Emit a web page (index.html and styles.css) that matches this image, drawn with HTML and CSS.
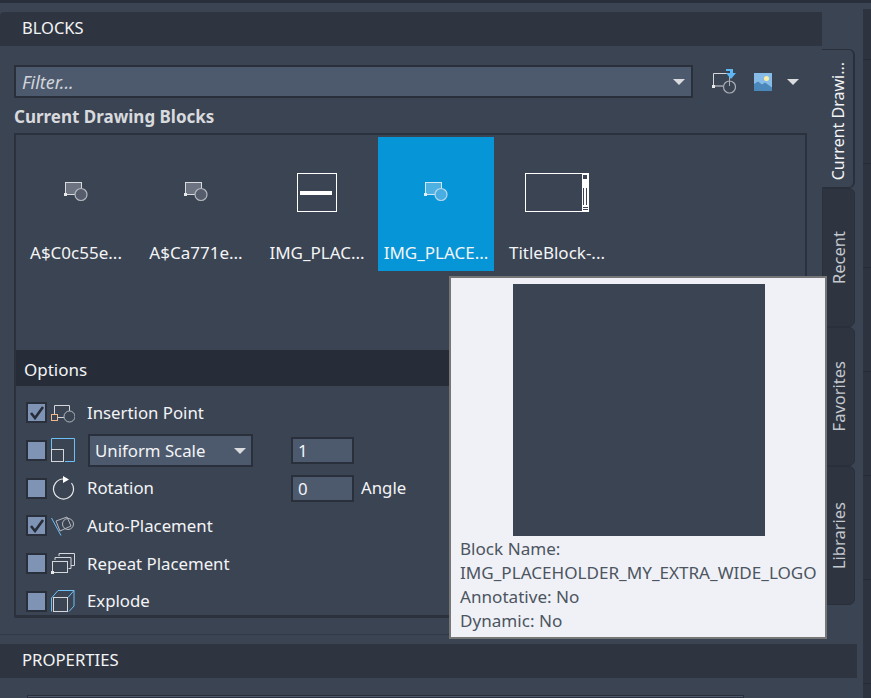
FILE: index.html
```html
<!DOCTYPE html>
<html lang="en">
<head>
<meta charset="utf-8">
<title>Blocks</title>
<link rel="stylesheet" href="styles.css">
</head>
<body>
<div class="page">
  <div class="main">
    <div class="bar blocks-bar">BLOCKS</div>
    <div class="body">
      <div class="panel">
        <div class="toolbar">
          <div class="filter"><span>Filter...</span><i class="caret"></i></div>
          <svg class="tool-a" width="24" height="25" viewBox="0 0 24 25"><path d="M1.500 17V4.500h16M1.500 17H11.500" fill="none" stroke="#d5d7db"/><rect x="0" y="16" width="3" height="3" fill="#e8e8e8"/><circle cx="17.500" cy="18" r="6" fill="none" stroke="#a9adb4" stroke-width="1.200"/><path d="M17.500 5v12" stroke="#a9adb4"/><path d="M14 0h7v4h3l-5 6-5-6h4V2h-4z" fill="#5cb8f5"/></svg>
          <svg class="tool-b" width="18" height="18" viewBox="0 0 18 18"><rect width="18" height="18" fill="#88bce8"/><circle cx="12.500" cy="5.500" r="2.500" fill="#fdeea4"/><path d="M0 18v-7l4-2.500 4 3 3-2 7 5v3.500z" fill="#4a87bb"/></svg>
          <i class="caret tool-caret"></i>
        </div>
        <div class="section-title">Current Drawing Blocks</div>
        <div class="browser">
          <div class="grid">
            <div class="cell">
              <div class="thumb"><svg width="24" height="20" viewBox="0 0 24 20"><rect x="1.500" y="0.500" width="16" height="12" fill="#6d7380" stroke="#d8dade"/><rect x="0" y="11" width="3" height="3" fill="#e8e8e8"/><circle cx="17" cy="12.500" r="6" fill="#565d6c" stroke="#b5b8be" stroke-width="1.200"/></svg></div>
              <div class="name">A$C0c55e...</div>
            </div>
            <div class="cell">
              <div class="thumb"><svg width="24" height="20" viewBox="0 0 24 20"><rect x="1.500" y="0.500" width="16" height="12" fill="#6d7380" stroke="#d8dade"/><rect x="0" y="11" width="3" height="3" fill="#e8e8e8"/><circle cx="17" cy="12.500" r="6" fill="#565d6c" stroke="#b5b8be" stroke-width="1.200"/></svg></div>
              <div class="name">A$Ca771e...</div>
            </div>
            <div class="cell">
              <div class="thumb"><svg width="40" height="40" viewBox="0 0 40 40"><rect x="0.500" y="1.500" width="39" height="38" fill="none" stroke="#fff"/><rect x="3" y="19" width="32" height="4" fill="#fff"/></svg></div>
              <div class="name">IMG_PLAC...</div>
            </div>
            <div class="cell selected">
              <div class="thumb"><svg width="24" height="20" viewBox="0 0 24 20"><rect x="1.500" y="0.500" width="16" height="12" fill="#4fb0e2" stroke="#cfe6f3"/><rect x="0" y="11" width="3" height="3" fill="#e0f0f8"/><circle cx="17" cy="12.500" r="6" fill="#49ade2" stroke="#b5d8ec" stroke-width="1.200"/></svg></div>
              <div class="name">IMG_PLACE...</div>
            </div>
            <div class="cell">
              <div class="thumb"><svg width="64" height="40" viewBox="0 0 64 40"><rect x="0.500" y="1.500" width="63" height="38" fill="none" stroke="#fff"/><rect x="57" y="2" width="6" height="37" fill="#fff"/><rect x="58" y="3" width="4" height="4" fill="#3c4453"/><path d="M58.500 16v17M61.500 16v17M58 35.500h5M58 37.500h5" stroke="#3c4453" fill="none"/></svg></div>
              <div class="name">TitleBlock-...</div>
            </div>
          </div>
          <div class="options">
            <div class="options-head">Options</div>
            <div class="option-list">
              <div class="opt">
                <span class="check"><svg width="16" height="14" viewBox="0 0 16 14"><path d="M2 7l4 5 8-11" fill="none" stroke="#262d39" stroke-width="2.600"/></svg></span>
                <svg class="ico" width="24" height="22" viewBox="0 0 24 22"><path d="M3.500 12V3.500h15V9M7 15.500h6" fill="none" stroke="#d5d7db"/><rect x="0.500" y="12.500" width="6" height="6" fill="none" stroke="#f0b68c"/><circle cx="18.500" cy="14.500" r="5.500" fill="none" stroke="#b5b8be"/></svg>
                <span class="label">Insertion Point</span>
              </div>
              <div class="opt">
                <span class="check"></span>
                <svg class="ico" width="24" height="26" viewBox="0 0 24 26"><path d="M.5 11V.5H23.500V23.500H14" fill="none" stroke="#6cc0f5"/><rect x=".5" y="11.500" width="12" height="12" fill="none" stroke="#d5d7db"/></svg>
                <div class="select"><span>Uniform Scale</span><i class="caret"></i></div>
                <div class="num num-scale">1</div>
              </div>
              <div class="opt">
                <span class="check"></span>
                <svg class="ico" width="24" height="24" viewBox="0 0 24 24"><path d="M12 3A10 10 0 1 0 20.500 7" fill="none" stroke="#e8e8e8" stroke-width="1.200"/><path d="M12 0l6 3.500-6 3.500z" fill="#fff"/></svg>
                <span class="label label-rot">Rotation</span>
                <div class="num">0</div>
                <span class="label angle">Angle</span>
              </div>
              <div class="opt">
                <span class="check"><svg width="16" height="14" viewBox="0 0 16 14"><path d="M2 7l4 5 8-11" fill="none" stroke="#262d39" stroke-width="2.600"/></svg></span>
                <svg class="ico" width="24" height="22" viewBox="0 0 24 22"><path d="M.5 3L10 20.500" stroke="#6cc0f5" fill="none"/><path d="M5 6l11-4 4 9-11 5z" fill="none" stroke="#b5b8be"/><circle cx="17" cy="9" r="5.500" fill="none" stroke="#b5b8be"/></svg>
                <span class="label">Auto-Placement</span>
              </div>
              <div class="opt">
                <span class="check"></span>
                <svg class="ico" width="24" height="22" viewBox="0 0 24 22"><path d="M8 3V.5h15.500v12h-3.500M4 7V4.500h16v11h-2.500" fill="none" stroke="#d5d7db"/><rect x="1.500" y="8.500" width="15" height="11" fill="none" stroke="#d5d7db"/><rect x="0" y="18" width="3" height="3" fill="#e8e8e8"/></svg>
                <span class="label">Repeat Placement</span>
              </div>
              <div class="opt">
                <span class="check"></span>
                <svg class="ico" width="24" height="24" viewBox="0 0 24 24"><path d="M.5 22.500V9L7 1.500h16V17l-5 5.500M17 8.500L23 1.500" fill="none" stroke="#6cc0f5"/><rect x="2.500" y="8.500" width="14" height="14" fill="none" stroke="#d5d7db"/></svg>
                <span class="label">Explode</span>
              </div>
            </div>
          </div>
        </div>
      </div>
    </div>
  </div>
  <div class="tabs">
    <div class="tab active"><span>Current Drawi...</span></div>
    <div class="tab"><span>Recent</span></div>
    <div class="tab"><span>Favorites</span></div>
    <div class="tab"><span>Libraries</span></div>
  </div>
  <div class="strip"></div>
  <div class="footer">
    <div class="rule"></div>
    <div class="bar props-bar">PROPERTIES</div>
    <div class="prop-box"></div>
  </div>
</div>
<div class="tooltip">
  <div class="preview"></div>
  <div class="tip-text">Block Name:<br>IMG_PLACEHOLDER_MY_EXTRA_WIDE_LOGO<br>Annotative: No<br>Dynamic: No</div>
</div>
</body>
</html>
```
FILE: styles.css
```css
* { box-sizing: border-box; }
html, body { margin: 0; height: 100%; overflow: hidden; }
body {
  background: #3b4453;
  color: #f3f4f6;
  font: 16.800px/22px "Noto Sans", "Open Sans", sans-serif;
  position: relative;
}
.page {
  width: 871px;
  height: 698px;
  border-top: 3px solid #2a303b;
  display: grid;
  grid-template-columns: 823px 32px 8px 8px;
  grid-template-rows: 631px 1fr;
}
.main { grid-column: 1; grid-row: 1; padding-top: 9px; display: flex; flex-direction: column; }
.bar {
  background: #2f3540;
  display: flex;
  align-items: center;
  padding-bottom: 2px;
}
.blocks-bar { height: 34px; padding-left: 22px; border-radius: 4px 0 0 0; width: 822px; font-size: 16.500px; }
.body { flex: 1; padding-right: 1px; }
.panel { height: 100%; display: flex; flex-direction: column; padding: 19px 16px 0 14px; }
.toolbar { display: flex; align-items: center; height: 33px; }
.filter {
  width: 679px;
  height: 33px;
  background: #4d5a6e;
  border: 2px solid #2a303b;
  display: flex;
  align-items: center;
  justify-content: space-between;
  padding: 0 6px;
  font-style: italic;
  font-size: 18px;
  color: #d2d5da;
}
.caret {
  width: 0; height: 0;
  border-left: 6px solid transparent;
  border-right: 6px solid transparent;
  border-top: 6px solid #d9dbdf;
  display: block;
}
.tool-a { margin-left: 19px; }
.tool-b { margin-left: 18px; }
.tool-caret { margin-left: 15px; }
.section-title { font-weight: 700; color: #d8dade; margin-top: 7px; height: 24px; font-size: 17px; line-height: 24px; }
.browser {
  margin-top: 4px;
  border: 2px solid #2c323d;
  border-bottom-width: 3px;
  border-radius: 0 0 2px 2px;
  display: flex;
  flex-direction: column;
  width: 793px;
  height: 485px;
  flex: none;
}
.grid { height: 215px; flex: none; display: flex; padding-top: 2px; font-size: 17px; }
.cell { width: 120px; height: 134px; display: flex; flex-direction: column; align-items: center; flex: none; }
.cell:nth-child(3) { margin-left: 1px; }
.cell:nth-child(4) { width: 116px; margin-left: 1px; }
.cell:nth-child(5) { margin-left: 3px; }
.selected { background: #0696d7; }
.thumb { height: 104px; padding-top: 6px; display: flex; align-items: center; justify-content: center; }
.name { height: 30px; padding-top: 1px; text-align: center; white-space: nowrap; }
.options { flex: 1; min-height: 0; display: flex; flex-direction: column; }
.options-head { height: 36px; flex: none; background: #262d39; padding: 9px 0 0 8px; font-size: 17px; }
.option-list { flex: 1; min-height: 0; padding: 8px 0 0 10px; display: flex; flex-direction: column; }
.opt { height: 37.700px; flex: none; display: flex; align-items: center; }
.check {
  width: 21px; height: 21px;
  background: #7f93b5;
  border: 2px solid #2a303b;
  display: flex;
  align-items: center;
  justify-content: center;
  flex: none;
}
.ico { margin-left: 4px; flex: none; }
.label { margin-left: 12px; white-space: nowrap; }
.label-rot { width: 204px; }
.select {
  width: 165px; height: 33px;
  margin-left: 13px;
  background: #4d5a6e;
  border: 2px solid #2a303b;
  display: flex;
  align-items: center;
  justify-content: space-between;
  padding: 0 5px;
}
.num {
  width: 63px; height: 27px;
  background: #4d5a6e;
  border: 2px solid #2a303b;
  padding-left: 5px;
  line-height: 24px;
}
.num-scale { margin-left: 38px; }
.angle { margin-left: 7px; }
.tabs { grid-column: 2; grid-row: 1; display: flex; flex-direction: column; padding-top: 46px; }
.tab {
  width: 33px;
  height: 139px;
  margin-left: -1px;
  background: #2f3540;
  border: 1px solid #2a303b;
  border-radius: 0 6px 6px 0;
  display: flex;
  align-items: center;
  justify-content: center;
}
.tab span { writing-mode: vertical-rl; transform: rotate(180deg); color: #c4c8cf; white-space: nowrap; font-size: 16.500px; }
.tab.active { background: #3b4453; border-left: 0; border-right: 2px solid #2a303b; padding-top: 6px; }
.tab.active span { color: #f3f4f6; font-size: 16px; }
.strip {
  grid-column: 4;
  grid-row: 1 / 3;
  margin-top: 6px;
  background: linear-gradient(to bottom, #2d3440 103px, #262c37 103px) 0 -53px / 100% 104px;
}
.footer { grid-column: 1 / 3; grid-row: 2; display: flex; flex-direction: column; }
.rule { height: 1px; background: #333a47; width: 823px; }
.props-bar { height: 34px; margin-top: 9px; padding-left: 22px; width: 857px; font-size: 16.700px; }
.prop-box { width: 717px; margin: 17px 0 0 27px; flex: 1; background: #4d5a6e; border: 1px solid #2a303b; }
.tooltip {
  position: absolute;
  left: 449px;
  top: 276px;
  width: 378px;
  height: 363px;
  background: #f0f1f7;
  border: 2px solid #767676;
  color: #4c5560;
  padding: 6px 9px;
  font-size: 17.100px;
}
.preview { width: 252px; height: 252px; background: #3b4453; margin-left: 53px; }
.tip-text { margin-top: 1px; line-height: 24px; white-space: nowrap; }
```
